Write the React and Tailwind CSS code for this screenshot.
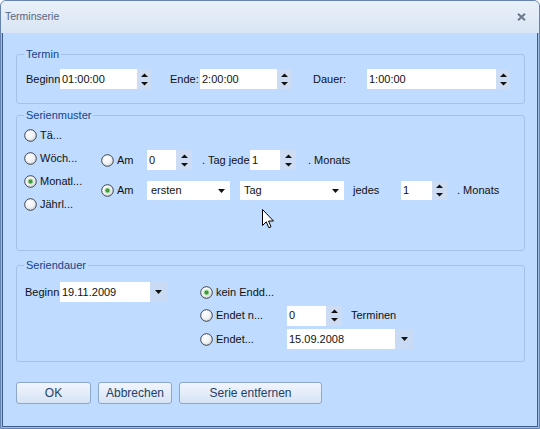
import React from "react";

function Radio({ checked }) {
  return (
    <svg width="13" height="13" viewBox="0 0 13 13" className="shrink-0">
      <circle cx="6.5" cy="6.5" r="5.8" fill="url(#radioGrad)" stroke="#3e454c" strokeWidth="1" />
      {checked && (
        <>
          <circle cx="6.5" cy="6.5" r="3" fill="#b4dcae" />
          <circle cx="6.5" cy="6.5" r="2" fill="#3c9a37" />
        </>
      )}
    </svg>
  );
}

function SpinArrows() {
  return (
    <svg width="7" height="13" viewBox="0 0 7 13">
      <polygon points="0,4 3.5,0.5 7,4" fill="#111" />
      <polygon points="0,9 3.5,12.5 7,9" fill="#111" />
    </svg>
  );
}

function Spin({ className }) {
  return (
    <div className={`h-full bg-[#cddcf2] flex items-center justify-center shrink-0 ${className}`}>
      <SpinArrows />
    </div>
  );
}

function DropArrow() {
  return (
    <svg width="7" height="4" viewBox="0 0 7 4" className="shrink-0">
      <polygon points="0,0 7,0 3.5,4" fill="#111" />
    </svg>
  );
}

function DropBtn({ className }) {
  return (
    <div className={`h-full bg-[#c9dbf4] flex items-center justify-center shrink-0 ${className}`}>
      <DropArrow />
    </div>
  );
}

function Field({ className, children }) {
  return (
    <div className={`h-full bg-white flex items-center pl-[2px] shrink-0 whitespace-nowrap ${className}`}>
      {children}
    </div>
  );
}

function Select({ className, children }) {
  return (
    <div className={`h-full bg-white flex items-center justify-between pl-[4px] pr-[5px] shrink-0 ${className}`}>
      <span>{children}</span>
      <DropArrow />
    </div>
  );
}

function RadioLabel({ checked, children, className }) {
  return (
    <div className={`flex items-center shrink-0 whitespace-nowrap ${className}`}>
      <Radio checked={checked} />
      <span className="ml-[3px]">{children}</span>
    </div>
  );
}

function Group({ title, children }) {
  return (
    <fieldset className="border border-[#a6c1e4] rounded-[3px]">
      <legend className="ml-[7px] px-[2px] text-[11px] leading-[14px] text-[#15428b]">{title}</legend>
      {children}
    </fieldset>
  );
}

function Btn({ className, children }) {
  return (
    <button
      className={`h-[22px] rounded-[3px] border border-[#8da7c9] bg-linear-to-b from-[#f1f6fd] to-[#d6e3f5] text-[#243f63] text-[12px] font-normal flex items-center justify-center ${className}`}
    >
      {children}
    </button>
  );
}

export default function App() {
  return (
    <div className="relative w-[540px] h-[429px] font-['Liberation_Sans',Arial,sans-serif] text-[11px] font-normal text-[#111]">
      <svg width="0" height="0" className="absolute">
        <defs>
          <radialGradient id="radioGrad" cx="35%" cy="30%" r="75%">
            <stop offset="0%" stopColor="#ffffff" />
            <stop offset="60%" stopColor="#f2f3f5" />
            <stop offset="100%" stopColor="#cfd5dc" />
          </radialGradient>
        </defs>
      </svg>
      <div className="w-full h-full flex flex-col bg-[#9fbde6] border border-[#6683ad] rounded-t-[6px] overflow-hidden">
        {/* Title bar */}
        <div className="h-[32px] shrink-0 flex items-center justify-between pl-[4px] pr-[13px] bg-linear-to-b from-[#e9f0f9] to-[#d9e5f4]">
          <span className="text-[10.5px] text-[#55657d]">Terminserie</span>
          <svg width="9" height="8" viewBox="0 0 9 8">
            <path d="M1 0.8 L8 7.2 M8 0.8 L1 7.2" stroke="#6a788c" strokeWidth="2" />
          </svg>
        </div>
        {/* Body */}
        <div className="flex-1 mx-[1px] mb-[1px] border-x border-b border-[#3c5d8e] bg-[#bfdbff] pl-[13px] pr-[12px] pt-[14px] flex flex-col">
          <Group title="Termin">
            <div className="pt-[8px] pb-[14px]">
              <div className="flex items-center h-[20px] pl-[9px]">
                <span className="w-[34px] shrink-0">Beginn</span>
                <Field className="w-[77px]">01:00:00</Field>
                <Spin className="w-[14px]" />
                <span className="ml-[19px] w-[30px] shrink-0">Ende:</span>
                <Field className="w-[77px]">2:00:00</Field>
                <Spin className="w-[14px]" />
                <span className="ml-[22px] w-[54px] shrink-0">Dauer:</span>
                <Field className="w-[129px]">1:00:00</Field>
                <Spin className="w-[14px]" />
              </div>
            </div>
          </Group>

          <div className="mt-[4px]">
            <Group title="Serienmuster">
              <div className="h-[128px] flex pl-[7px]">
                <div className="w-[77px] shrink-0 pt-[2px] flex flex-col">
                  <RadioLabel className="h-[23px]">Tä...</RadioLabel>
                  <RadioLabel className="h-[23px]">Wöch...</RadioLabel>
                  <RadioLabel className="h-[23px]" checked>Monatl...</RadioLabel>
                  <RadioLabel className="h-[23px]">Jährl...</RadioLabel>
                </div>
                <div className="pt-[28px] flex flex-col gap-[11px]">
                  <div className="flex items-center h-[20px]">
                    <RadioLabel className="w-[46px]">Am</RadioLabel>
                    <Field className="w-[29px]">0</Field>
                    <Spin className="w-[16px]" />
                    <span className="ml-[10px] w-[48px] shrink-0 whitespace-nowrap">. Tag jede</span>
                    <Field className="w-[30px]">1</Field>
                    <Spin className="w-[16px]" />
                    <span className="ml-[12px] whitespace-nowrap">. Monats</span>
                  </div>
                  <div className="flex items-center h-[19px]">
                    <RadioLabel className="w-[46px]" checked>Am</RadioLabel>
                    <Select className="w-[83px]">ersten</Select>
                    <Select className="w-[104px] ml-[10px]">Tag</Select>
                    <span className="ml-[9px] w-[48px] shrink-0">jedes</span>
                    <Field className="w-[31px]">1</Field>
                    <Spin className="w-[15px]" />
                    <span className="ml-[10px] whitespace-nowrap">. Monats</span>
                  </div>
                </div>
              </div>
            </Group>
          </div>

          <div className="mt-[7px]">
            <Group title="Seriendauer">
              <div className="h-[89px] flex items-start pt-[10px] pl-[8px]">
                <div className="flex items-center h-[20px]">
                  <span className="w-[35px] shrink-0">Beginn</span>
                  <Field className="w-[90px]">19.11.2009</Field>
                  <DropBtn className="w-[17px]" />
                </div>
                <div className="ml-[33px] flex flex-col gap-[3.5px]">
                  <div className="flex items-center h-[20px]">
                    <RadioLabel className="w-[87px]" checked>kein Endd...</RadioLabel>
                  </div>
                  <div className="flex items-center h-[20px]">
                    <RadioLabel className="w-[87px]">Endet n...</RadioLabel>
                    <Field className="w-[39px]">0</Field>
                    <Spin className="w-[16px]" />
                    <span className="ml-[9px]">Terminen</span>
                  </div>
                  <div className="flex items-center h-[20px]">
                    <RadioLabel className="w-[87px]">Endet...</RadioLabel>
                    <Field className="w-[108px]">15.09.2008</Field>
                    <DropBtn className="w-[18px]" />
                  </div>
                </div>
              </div>
            </Group>
          </div>

          <div className="mt-[20px] flex gap-[7px]">
            <Btn className="w-[75px]">OK</Btn>
            <Btn className="w-[74px]">Abbrechen</Btn>
            <Btn className="w-[143px]">Serie entfernen</Btn>
          </div>
        </div>
      </div>

      {/* mouse cursor overlay */}
      <svg width="13" height="20" viewBox="0 0 13 20" className="absolute left-[262px] top-[209px]">
        <path d="M0.5 0.5 L0.5 16.5 L4.3 12.8 L6.8 18.7 L9 17.8 L6.6 12 L11.5 12 Z" fill="#fff" stroke="#000" strokeWidth="1" strokeLinejoin="miter" />
      </svg>
    </div>
  );
}
